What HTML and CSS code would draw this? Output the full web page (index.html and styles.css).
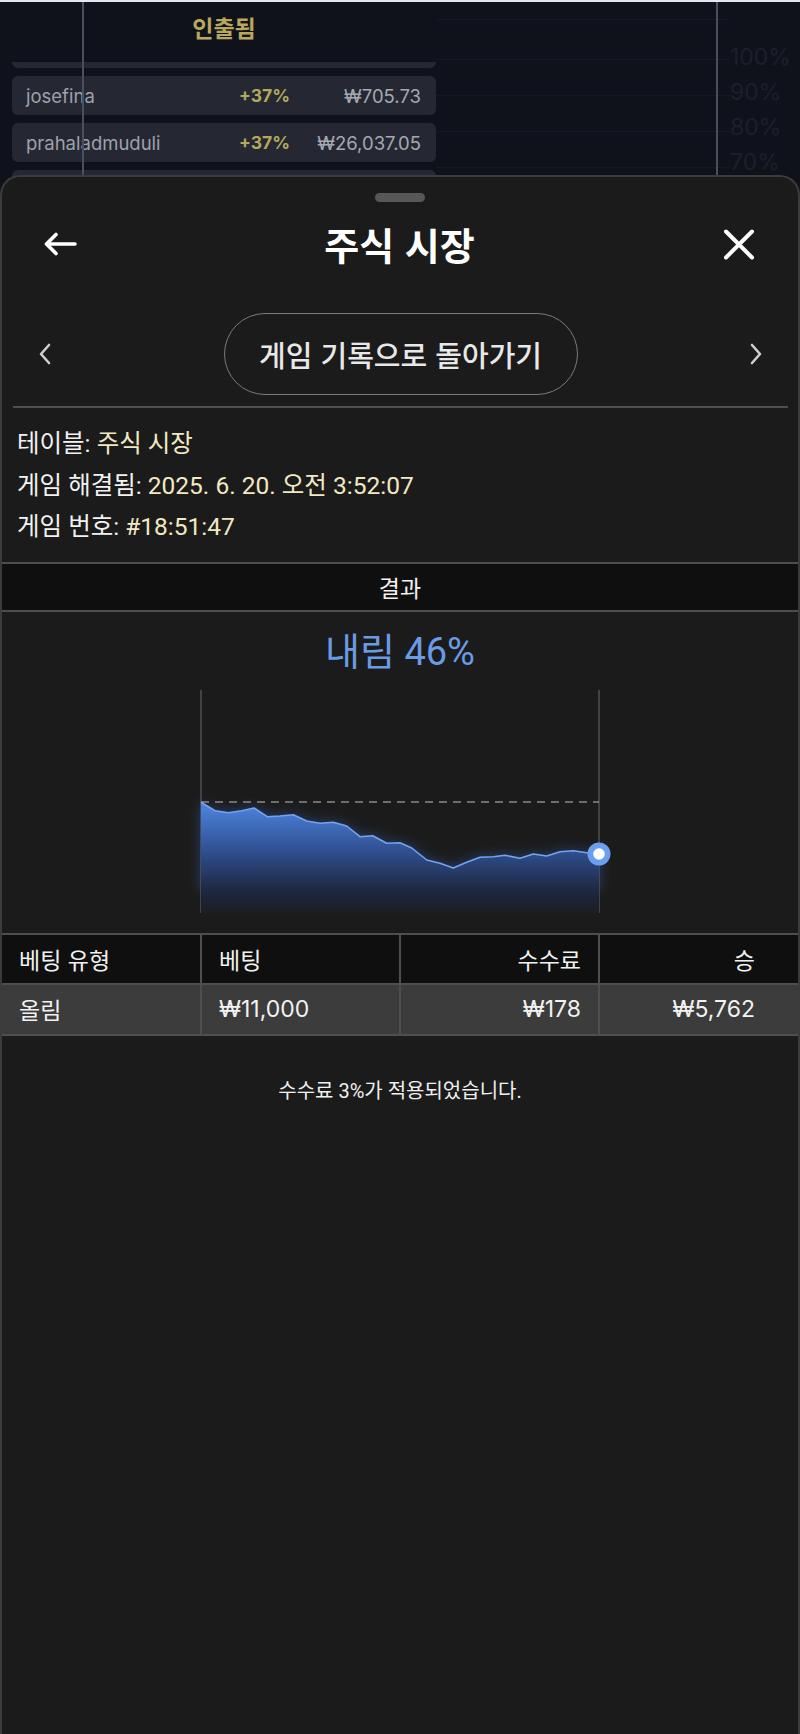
FILE: index.html
```html
<!DOCTYPE html>
<html lang="ko">
<head>
<meta charset="utf-8">
<title>주식 시장</title>
<link rel="stylesheet" href="styles.css">
</head>
<body>
<div class="backdrop">
  <div class="board">
    <div class="board-head">인출됨</div>
    <div class="rows">
      <div class="row stub"></div>
      <div class="row"><span class="name">josefina</span><span class="pct">+37%</span><span class="amt">₩705.73</span></div>
      <div class="row"><span class="name">prahaladmuduli</span><span class="pct">+37%</span><span class="amt">₩26,037.05</span></div>
      <div class="row"><span class="name">player</span><span class="pct">+37%</span><span class="amt">₩1,000.00</span></div>
    </div>
  </div>
  <div class="mid"></div>
  <div class="axis"><span>100%</span><span>90%</span><span>80%</span><span>70%</span><span>60%</span></div>
  <div class="vline v1"></div>
  <div class="vline v2"></div>
</div>

<div class="sheet">
  <div class="handle"></div>
  <div class="sheet-head">
    <button class="icon-btn back" aria-label="뒤로">
      <svg width="34" height="24" viewBox="0 0 34 24"><path d="M32 12H4M13 2.5L3.5 12L13 21.5" fill="none" stroke="#fff" stroke-width="3.6" stroke-linecap="round" stroke-linejoin="round"/></svg>
    </button>
    <h1 class="title">주식 시장</h1>
    <button class="icon-btn close" aria-label="닫기">
      <svg width="32" height="31" viewBox="0 0 32 31"><path d="M3 2.5L29 28.5M29 2.5L3 28.5" fill="none" stroke="#fff" stroke-width="4" stroke-linecap="round"/></svg>
    </button>
  </div>

  <div class="nav">
    <svg class="chev" width="16" height="24" viewBox="0 0 16 24"><path d="M12 3L4 12L12 21" fill="none" stroke="#cfcfcf" stroke-width="2.6" stroke-linecap="round" stroke-linejoin="round"/></svg>
    <button class="pill">게임 기록으로 돌아가기</button>
    <svg class="chev" width="16" height="24" viewBox="0 0 16 24"><path d="M4 3L12 12L4 21" fill="none" stroke="#cfcfcf" stroke-width="2.6" stroke-linecap="round" stroke-linejoin="round"/></svg>
  </div>

  <div class="divider"></div>

  <div class="info">
    <p>테이블: <span class="val">주식 시장</span></p>
    <p>게임 해결됨: <span class="val">2025. 6. 20. 오전 3:52:07</span></p>
    <p>게임 번호: <span class="val">#18:51:47</span></p>
  </div>

  <div class="result-bar">결과</div>

  <div class="outcome">내림 46%</div>

  <div class="chart">
    <svg width="400" height="224" viewBox="0 0 400 224">
      <defs>
        <linearGradient id="fill" x1="0" y1="110" x2="0" y2="224" gradientUnits="userSpaceOnUse">
          <stop offset="0" stop-color="#5088e6"/>
          <stop offset="0.45" stop-color="#2f4f8f"/>
          <stop offset="0.8" stop-color="#1d2740"/>
          <stop offset="1" stop-color="#1b1d22"/>
        </linearGradient>
        <filter id="glow" x="-20%" y="-40%" width="140%" height="180%">
          <feGaussianBlur stdDeviation="7"/>
        </filter>
      </defs>
      <line x1="1" y1="0" x2="1" y2="223" stroke="#5e5e5e" stroke-width="1.2"/>
      <line x1="399" y1="0" x2="399" y2="223" stroke="#5e5e5e" stroke-width="1.2"/>
      <path filter="url(#glow)" opacity="0.45" fill="#3c6fd0" d="M1 112.3L15 120.7L28.3 122.7L41.7 120.7L54 118L67.3 126.7L80 126L93.3 124.7L106.7 131L120 133.3L133.3 132.3L146.7 136L160 146.7L172.7 145.7L186.7 153.3L200 152.7L211.7 158L226.7 170L240 173.3L253.3 178L266.7 172.3L280 167.3L293.3 166.7L305 165.3L320 168.3L333.3 164L346.7 166L360 161.7L373.3 160.7L386.7 162.7L399 164L399 200L1 200Z"/>
      <path fill="url(#fill)" d="M1 112.3L15 120.7L28.3 122.7L41.7 120.7L54 118L67.3 126.7L80 126L93.3 124.7L106.7 131L120 133.3L133.3 132.3L146.7 136L160 146.7L172.7 145.7L186.7 153.3L200 152.7L211.7 158L226.7 170L240 173.3L253.3 178L266.7 172.3L280 167.3L293.3 166.7L305 165.3L320 168.3L333.3 164L346.7 166L360 161.7L373.3 160.7L386.7 162.7L399 164L399 223L1 223Z"/>
      <line x1="1" y1="112" x2="399" y2="112" stroke="#8a8a8a" stroke-width="1.4" stroke-dasharray="8 6"/>
      <path fill="none" stroke="#74a3f2" stroke-width="1.6" stroke-linejoin="round" d="M1 112.3L15 120.7L28.3 122.7L41.7 120.7L54 118L67.3 126.7L80 126L93.3 124.7L106.7 131L120 133.3L133.3 132.3L146.7 136L160 146.7L172.7 145.7L186.7 153.3L200 152.7L211.7 158L226.7 170L240 173.3L253.3 178L266.7 172.3L280 167.3L293.3 166.7L305 165.3L320 168.3L333.3 164L346.7 166L360 161.7L373.3 160.7L386.7 162.7L399 164"/>
      <circle cx="399" cy="164" r="11.5" fill="#6c9ef0"/>
      <circle cx="399" cy="164" r="5.8" fill="#fff"/>
    </svg>
  </div>

  <table class="bets">
    <thead>
      <tr><th class="l">베팅 유형</th><th class="l">베팅</th><th class="r">수수료</th><th class="r last">승</th></tr>
    </thead>
    <tbody>
      <tr><td class="l">올림</td><td class="l">₩11,000</td><td class="r">₩178</td><td class="r last">₩5,762</td></tr>
    </tbody>
  </table>

  <p class="note">수수료 3%가 적용되었습니다.</p>
</div>
</body>
</html>
```

FILE: styles.css
```css
* { box-sizing: border-box; }

html, body {
  margin: 0;
  padding: 0;
  width: 800px;
  height: 1734px;
  overflow: hidden;
  background: #10121b;
}

body {
  position: relative;
  font-family: "Roboto", "Noto Sans CJK KR", sans-serif;
  color: #fff;
}

/* ---------- backdrop (leaderboard behind sheet) ---------- */
.backdrop {
  position: relative;
  display: flex;
  height: 1734px;
  border-top: 2px solid #e6e7ee;
  background: #10121b;
  font-family: "Inter", "Noto Sans CJK KR", sans-serif;
}

.board {
  margin-left: 12px;
  width: 424px;
  display: flex;
  flex-direction: column;
}

.board-head {
  height: 60px;
  padding-bottom: 10px;
  display: flex;
  align-items: center;
  justify-content: center;
  font-family: "Noto Sans CJK KR", sans-serif;
  font-weight: 700;
  font-size: 23px;
  color: #b8a75c;
}

.rows {
  display: flex;
  flex-direction: column;
  gap: 8px;
}

.row {
  height: 39px;
  border-radius: 6px;
  background: #252833;
  display: grid;
  grid-template-columns: 1fr auto 125px;
  column-gap: 6px;
  align-items: center;
  padding: 0 15px 0 14px;
  font-size: 18.5px;
}

.row.stub {
  height: 6px;
  border-radius: 0 0 6px 6px;
}

.name { color: #9ea1aa; }
.pct { color: #b4a85c; font-weight: 700; font-size: 17.5px; text-align: right; }
.amt { color: #a6a9b1; text-align: right; }

.mid {
  flex: 1;
  background-image: repeating-linear-gradient(to bottom, transparent 0, transparent 35px, #161925 35px, #161925 36px);
  background-position: 0 22px;
}

.axis {
  width: 70px;
  padding-top: 38px;
  display: flex;
  flex-direction: column;
  font-size: 23px;
  line-height: 35px;
  color: #1d1f2b;
}

.vline {
  position: absolute;
  top: 0;
  bottom: 0;
  width: 2px;
  background: #4a4f5b;
}
.v1 { left: 82px; }
.v2 { left: 716px; }

/* ---------- bottom sheet ---------- */
.sheet {
  position: absolute;
  top: 175px;
  left: 0;
  right: 0;
  bottom: 0;
  background: #1b1b1b;
  border: 2px solid #3b3b3b;
  border-bottom: none;
  border-radius: 20px 20px 0 0;
  display: flex;
  flex-direction: column;
}

.handle {
  align-self: center;
  margin-top: 16px;
  width: 50px;
  height: 9px;
  border-radius: 5px;
  background: #575757;
}

.sheet-head {
  margin-top: 12px;
  height: 60px;
  display: flex;
  align-items: center;
  justify-content: space-between;
  padding: 0 42px 0 41px;
}

.icon-btn {
  background: none;
  border: none;
  padding: 0;
  width: 34px;
  height: 32px;
  display: flex;
  align-items: center;
  justify-content: center;
}

.title {
  margin: 0;
  font-family: "Noto Sans CJK KR", sans-serif;
  font-size: 38px;
  font-weight: 700;
  line-height: 60px;
  color: #fff;
}

.nav {
  margin-top: 39px;
  display: flex;
  align-items: center;
  justify-content: space-between;
  padding: 0 34px 0 35px;
}

.pill {
  width: 354px;
  height: 82px;
  border-radius: 41px;
  border: 1.5px solid #7b7b7b;
  background: transparent;
  color: #e8e8e8;
  font-family: "Noto Sans CJK KR", sans-serif;
  font-size: 29px;
  font-weight: 500;
  padding: 0;
}

.divider {
  margin: 11px 10px 0 11px;
  height: 2px;
  background: #4e4e4e;
}

.info {
  margin-top: 15px;
  padding-left: 15px;
}

.info p {
  margin: 0;
  font-size: 24.5px;
  line-height: 41.5px;
  color: #f2f2f2;
}

.val { color: #f1e9c2; }

.result-bar {
  margin-top: 14px;
  height: 50px;
  background: #0f0f0f;
  border-top: 2px solid #4e4e4e;
  border-bottom: 2px solid #4e4e4e;
  display: flex;
  align-items: center;
  justify-content: center;
  font-size: 23px;
  color: #f2f2f2;
}

.outcome {
  margin-top: 18px;
  text-align: center;
  font-size: 38px;
  line-height: 44px;
  color: #6a9be6;
}

.chart {
  margin-top: 16px;
  display: flex;
  justify-content: center;
}

.chart svg { overflow: visible; }

.bets {
  margin-top: 19px;
  width: 100%;
  border-collapse: collapse;
  table-layout: fixed;
  font-family: "Inter", "Noto Sans CJK KR", sans-serif;
  font-size: 23px;
}

.bets th, .bets td {
  border: 2px solid #4e4e4e;
  font-weight: 400;
  color: #f2f2f2;
  white-space: nowrap;
}

.bets th {
  height: 50px;
  background: #0f0f0f;
}

.bets td {
  height: 51px;
  background: #3c3c3c;
}

.bets .l { text-align: left; padding-left: 17px; }
.bets .r { text-align: right; padding-right: 17px; }
.bets .r.last { padding-right: 43px; }

.bets tr > :first-child { border-left: none; }
.bets tr > :last-child { border-right: none; }

.note {
  margin: 42px 0 0;
  text-align: center;
  font-size: 20px;
  line-height: 26px;
  color: #f0f0f0;
}
```
